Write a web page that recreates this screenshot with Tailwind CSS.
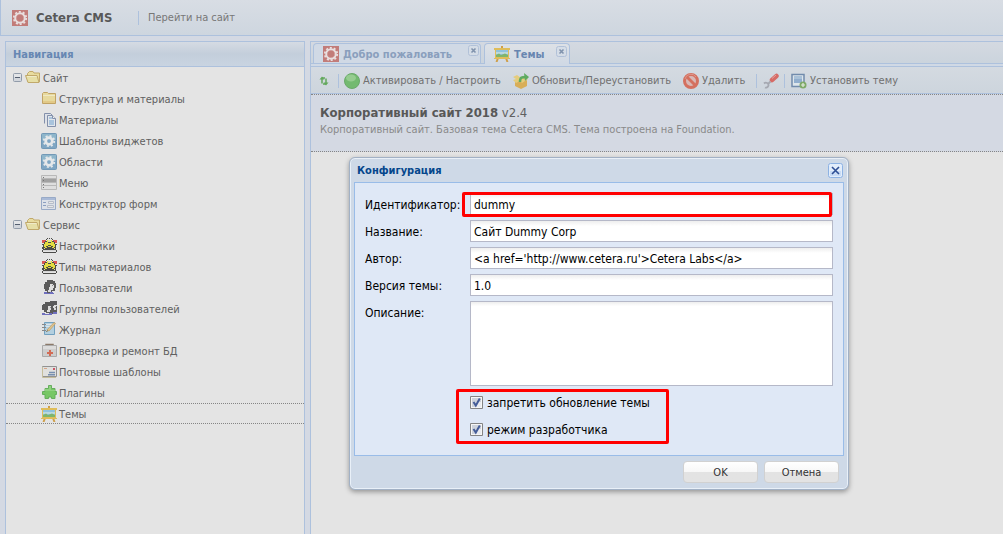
<!DOCTYPE html>
<html lang="ru">
<head>
<meta charset="utf-8">
<title>Cetera CMS</title>
<script src="https://cdn.jsdelivr.net/npm/@tailwindcss/browser@4"></script>
</head>
<body class="relative flex h-screen flex-col overflow-hidden bg-[#d4d9e3] font-['DejaVu_Sans_Condensed','DejaVu_Sans',sans-serif] text-[11px] leading-4 text-[#606060]">

<svg class="hidden" aria-hidden="true">
  <symbol id="logo" viewBox="0 0 16 16"><path fill="#c27c79" d="M0 0h16v16H0z"/><circle cx="8" cy="8" r="4.800" fill="none" stroke="#e9e0e0" stroke-width="2"/><circle cx="8" cy="8" r="6.200" fill="none" stroke="#e9e0e0" stroke-width="1.800" stroke-dasharray="2 1.900"/><circle cx="8" cy="8" r="3.600" fill="none" stroke="#d6a5a3" stroke-dasharray="1 1.300"/></symbol>
  <symbol id="minus" viewBox="0 0 9 9"><rect x=".5" y=".5" width="8" height="8" rx="1" fill="#d2d6dc" stroke="#929caa"/><path fill="#e2e4e7" d="M1 1h7v3H1z"/><path stroke="#555f70" d="M2 4.500h5"/></symbol>
  <symbol id="open" viewBox="0 0 16 16"><path d="M2.500 12V3.500l2-2H8l1 1.500h5.500V12" fill="#e8dc9f" stroke="#c1a96b"/><path d="M3 12.500 .5 5.500h11.500l2 7z" fill="#e6dfa6" stroke="#c1a96b"/><path d="M2 6.500h9.500" stroke="#f0ebc9"/></symbol>
  <symbol id="folder" viewBox="0 0 16 16"><path d="M1.500 12.500V2.500l1-1h4l1 1h7v10z" fill="#e7d99d" stroke="#c1a365"/><path d="M2 4.500h12" stroke="#efe8c5"/><path d="M2 10h12v2H2z" fill="#e2c987"/></symbol>
  <symbol id="docs" viewBox="0 0 16 16"><path d="M3.500 11.500v-10h6l2 2" fill="#dde1e8" stroke="#8390ab"/><path d="M6.500 3.500h5l3 3v8h-8z" fill="#e1e6ec" stroke="#8390ab"/><path fill="#a9c4dd" d="M8 8h5v5H8zM8 5h3v2H8z"/><path d="M11.500 3.500v3h3" fill="#eee" stroke="#8390ab"/></symbol>
  <symbol id="gear" viewBox="0 0 16 16"><rect x=".5" y=".5" width="15" height="15" rx="1" fill="#7fa6c3" stroke="#7299b7"/><path fill="#8eb6cb" d="M1 1h14v6H1z"/><circle cx="8" cy="8" r="3.300" fill="none" stroke="#e5e8ea" stroke-width="2.800"/><circle cx="8" cy="8" r="5.200" fill="none" stroke="#e5e8ea" stroke-width="1.800" stroke-dasharray="2 2.080"/></symbol>
  <symbol id="menu" viewBox="0 0 16 16"><path d="M.5 .5h15v14H.5z" fill="#dedede" stroke="#b8b8b8"/><path fill="#a0a0a0" d="M1 4h14v3H1z"/><path stroke="#b8b8b8" d="M0 3.500h16M0 7.500h16M0 10.500h16"/><path stroke="#777" d="M2 2.500h1M2 5.500h1M2 9.500h1M2 12.500h1"/></symbol>
  <symbol id="form" viewBox="0 0 16 16"><path d="M.5 1.500h14v12H.5z" fill="#dce1e8" stroke="#98aac7"/><path fill="#a9bad7" d="M1 2h13v2H1z"/><path d="M2 6.500h3M2 9.500h3" stroke="#8b9fc0"/><path d="M7.500 5.500h5v2h-5zM6.500 9.500h6v2h-6z" fill="#e6e6e6" stroke="#b6bdc9"/></symbol>
  <symbol id="bulb" viewBox="0 0 16 16" shape-rendering="crispEdges"><path fill="#dc5755" d="M1 2h4v3H1zM12 2h4v3h-4z"/><path fill="#e4e4e4" d="M5 1h7v4H5z"/><path fill="#4b4b48" d="M6 0h1v1H6zM8 0h1v1H8zM10 0h1v1h-1zM5 1h1v1H5zM11 1h1v1h-1zM4 3h9v1h1v2h1v7H2V6h1V4h1zM1 6h1v1H1zM15 6h1v1h-1zM1 9h1v2H1zM1 12h1v1H1zM15 12h1v1h-1z"/><path fill="#e4dd40" d="M6 2h1v2H6zM10 2h1v2h-1zM4 4h3v1h3V4h3v2h1v3h-2V8h-2V7H7v1H5v1H3V6h1zM4 9h2v1H4zM11 9h2v1h-2zM7 8h3v1H7z"/><path fill="#e4e29a" d="M7 2h3v2H7zM3 10h1v1H3zM13 10h1v1h-1z"/><path fill="#d4d4d4" d="M2 12h13v1H2z"/><path fill="#4b4b48" d="M2 14h13v1H2zM1 13h1v1H1zM15 13h1v1h-1z"/></symbol>
  <symbol id="user" viewBox="0 0 16 16" shape-rendering="crispEdges"><path fill="#5b5b5b" d="M6 0h6v1h2v2h1v5h-1v3h-3v2H6v-2H4V9H3V4h1V2h2z"/><path fill="#dedede" d="M9 4h3v1h1v3h-1v2h-2v2H7v-2h1V7h1z"/><path fill="#8c8c8c" d="M11 5h1v1h-1z"/><path fill="#6f6fbd" d="M3 12h3v1h3v-1h3v1h1v1H3z"/></symbol>
  <symbol id="users" viewBox="0 0 16 16" shape-rendering="crispEdges"><path fill="#5b5b5b" d="M9 0h7v13H9zM4 1h6v1h2v10H5v-1H3V9H1V4h1V3h2z"/><path fill="#dedede" d="M7 5h3v4H9v2H6V9h1zM13 4h3v1h-1v4h-2V7h-1V5h1z"/><path fill="#8c8c8c" d="M9 6h1v1H9zM14 6h1v1h-1z"/><path fill="#6f6fbd" d="M1 12h3v1h4v-1h3v2H1zM12 11h4v2h-4z"/></symbol>
  <symbol id="journal" viewBox="0 0 16 16"><path d="M3.500 .5h10v12h-10z" fill="#b3cfdf" stroke="#71a0bf"/><path stroke="#dbe4ea" d="M5 2.500h6M5 4.500h4"/><path stroke="#888" d="M1 2.500h4M1 5.500h4M1 8.500h4"/><path d="M6 8 13 .5 14.500 1.500 8 9z" fill="#dfc48c" stroke="#c29a60" stroke-width=".7"/><path stroke="#72633f" d="m5.500 10 1-1.500"/></symbol>
  <symbol id="medic" viewBox="0 0 16 16"><path d="M5 3V1.500h7V3" fill="none" stroke="#8b7969" stroke-width="1.500"/><path d="M1.500 2.500h14v11h-14z" fill="#cdcdcd" stroke="#aaa"/><path fill="#dcdcdc" d="M2 3h13v3H2z"/><path fill="#d26b55" d="M8 7h2v2h2v2h-2v2H8v-2H6V9h2z"/></symbol>
  <symbol id="mail" viewBox="0 0 16 16"><path d="M1.500 2.500h14v10h-14z" fill="#e0e0de" stroke="#929292"/><path fill="#c56" d="M12 4h2v2h-2z"/><path stroke="#d7a68b" d="M3 4.500h3"/><path stroke="#7890b0" stroke-width="1.500" d="M8 8.500h6M7 10.800h7"/><path d="M1.500 3v10.500H15" fill="none" stroke="#c5bd9b"/></symbol>
  <symbol id="puzzle" viewBox="0 0 16 16"><path d="M7.500 .5h3v3H14v3h1.500v3H14v4h-3.500V12h-3v1.500H4V9.500H1.500v-3H4v-3h3.500z" fill="#77c765" stroke="#66ae5d" stroke-linejoin="round"/><path fill="#8fd27f" d="M8 1h2v4h4v1H4V4h4z"/></symbol>
  <symbol id="theme" viewBox="0 0 16 16"><path stroke="#cf9f4a" stroke-width="2" d="m4 12-1.500 4M12 12l1.500 4M8 0v3"/><path fill="#dfbd5a" d="M0 2h16v2h-1v8h1v1H0v-1h1V4H0z"/><path fill="#8fc2df" d="M2 4h12v7H2z"/><path fill="#bad9df" d="M2 6h12v2H2z"/><path fill="#7fb56d" d="M2 11V9l3-1.500 2 1.500 4-1.500L14 9v2z"/></symbol>
  <symbol id="tabx" viewBox="0 0 11 11"><rect x=".5" y=".5" width="10" height="10" rx="2" fill="#d5dde7" stroke="#b1c1d8"/><path d="m3.500 3.500 4 4m0-4-4 4" stroke="#8093ad" stroke-width="1.600"/></symbol>
</svg>

<header class="flex h-9 shrink-0 items-center border-b border-l border-[#adc1dd] bg-linear-to-b from-[#d8dde4] to-[#ced6df] pl-[11px]">
  <svg class="size-4"><use href="#logo"/></svg>
  <h1 class="ml-2 w-[102px] text-[13px] font-bold text-[#585858]">Cetera CMS</h1>
  <span class="h-3.5 w-px bg-[#adc1dd]"></span>
  <a href="#" class="ml-[9px] text-[#777]">Перейти на сайт</a>
</header>

<div class="flex min-h-0 flex-1 gap-[5px] pt-[5px] pl-[5px]">
  <nav class="w-[300px] shrink-0 border border-b-0 border-[#adc1dd] bg-[#e4e4e4]" aria-label="Навигация">
    <h2 class="flex h-[25px] items-center border-b border-[#adc1dd] bg-linear-to-b from-[#d5dbe3] via-[#c3cedb] to-[#c9d4e1] pt-0.5 pl-[7px] font-bold text-[#6787b3]">Навигация</h2>
    <ul>
      <li class="flex h-[21px] items-center pl-[7px]"><svg class="mr-[3px] size-[9px]"><use href="#minus"/></svg><svg class="mr-0.5 size-4"><use href="#open"/></svg><span class="pt-0.5">Сайт</span></li>
      <li class="flex h-[21px] items-center gap-0.5 pl-[35px]"><svg class="size-4"><use href="#folder"/></svg><span class="pt-0.5">Структура и материалы</span></li>
      <li class="flex h-[21px] items-center gap-0.5 pl-[35px]"><svg class="size-4"><use href="#docs"/></svg><span class="pt-0.5">Материалы</span></li>
      <li class="flex h-[21px] items-center gap-0.5 pl-[35px]"><svg class="size-4"><use href="#gear"/></svg><span class="pt-0.5">Шаблоны виджетов</span></li>
      <li class="flex h-[21px] items-center gap-0.5 pl-[35px]"><svg class="size-4"><use href="#gear"/></svg><span class="pt-0.5">Области</span></li>
      <li class="flex h-[21px] items-center gap-0.5 pl-[35px]"><svg class="size-4"><use href="#menu"/></svg><span class="pt-0.5">Меню</span></li>
      <li class="flex h-[21px] items-center gap-0.5 pl-[35px]"><svg class="size-4"><use href="#form"/></svg><span class="pt-0.5">Конструктор форм</span></li>
      <li class="flex h-[21px] items-center pl-[7px]"><svg class="mr-[3px] size-[9px]"><use href="#minus"/></svg><svg class="mr-0.5 size-4"><use href="#open"/></svg><span class="pt-0.5">Сервис</span></li>
      <li class="flex h-[21px] items-center gap-0.5 pl-[35px]"><svg class="size-4"><use href="#bulb"/></svg><span class="pt-0.5">Настройки</span></li>
      <li class="flex h-[21px] items-center gap-0.5 pl-[35px]"><svg class="size-4"><use href="#bulb"/></svg><span class="pt-0.5">Типы материалов</span></li>
      <li class="flex h-[21px] items-center gap-0.5 pl-[35px]"><svg class="size-4"><use href="#user"/></svg><span class="pt-0.5">Пользователи</span></li>
      <li class="flex h-[21px] items-center gap-0.5 pl-[35px]"><svg class="size-4"><use href="#users"/></svg><span class="pt-0.5">Группы пользователей</span></li>
      <li class="flex h-[21px] items-center gap-0.5 pl-[35px]"><svg class="size-4"><use href="#journal"/></svg><span class="pt-0.5">Журнал</span></li>
      <li class="flex h-[21px] items-center gap-0.5 pl-[35px]"><svg class="size-4"><use href="#medic"/></svg><span class="pt-0.5">Проверка и ремонт БД</span></li>
      <li class="flex h-[21px] items-center gap-0.5 pl-[35px]"><svg class="size-4"><use href="#mail"/></svg><span class="pt-0.5">Почтовые шаблоны</span></li>
      <li class="flex h-[21px] items-center gap-0.5 pl-[35px]"><svg class="size-4"><use href="#puzzle"/></svg><span class="pt-0.5">Плагины</span></li>
      <li class="flex h-[21px] items-center gap-0.5 border-y border-dotted border-[#858585] pl-[35px]"><svg class="size-4"><use href="#theme"/></svg><span class="pt-0.5">Темы</span></li>
    </ul>
  </nav>

  <main class="flex min-w-0 flex-1 flex-col border-t border-l border-[#adc1dd] bg-[#e4e4e4]">
    <div class="flex h-[22px] items-end gap-[3px] border-b border-[#adc1dd] bg-linear-to-b from-[#d4d9e1] to-[#cbd4dd] pl-0.5 font-bold">
      <div class="flex h-5 w-[168px] items-center rounded-t-sm border border-b-0 border-[#adc1dd] bg-[#d0d9e5] pl-[9px] text-[#8a9fbd]">
        <svg class="size-4"><use href="#logo"/></svg><button class="ml-1 flex-1 pt-0.5 text-left">Добро пожаловать</button>
        <button class="mr-px mb-1.5" aria-label="Закрыть"><svg class="size-[11px]"><use href="#tabx"/></svg></button>
      </div>
      <div class="-mb-px flex h-[21px] w-[86px] items-center rounded-t-sm border border-b-0 border-[#adc1dd] bg-linear-to-b from-[#dde1e6] to-[#d0d9e5] pl-[9px] text-[#6886b0]">
        <svg class="size-4"><use href="#theme"/></svg><button class="ml-1 flex-1 pt-0.5 text-left">Темы</button>
        <button class="mr-0.5 mb-1.5" aria-label="Закрыть"><svg class="size-[11px]"><use href="#tabx"/></svg></button>
      </div>
    </div>
    <div class="h-[3px] border-b border-[#adc1dd] bg-[#d0d9e5]"></div>
    <div class="flex h-[27px] shrink-0 items-center border-b border-[#adc1dd] bg-linear-to-b from-[#d4dae1] to-[#cdd5dd] pt-px pl-[5px] text-[#707070]" role="toolbar">
      <button aria-label="Обновить" class="mr-1"><svg class="size-4" viewBox="0 0 16 16"><path d="M6 10.500V6M10 5.500V10M6 5h3M7 11h3" fill="none" stroke="#62a85c" stroke-width="1.500"/><path fill="#62a85c" d="M3.500 6.500 6 3.500 8.500 6.500zM7.500 9.500h5L10 12.500z"/></svg></button>
      <span class="mr-[5px] ml-0.5 h-3.5 w-px bg-[#adc1dd]"></span>
      <button class="flex w-[169px] items-center gap-[3px]"><svg class="size-4" viewBox="0 0 16 16"><circle cx="8" cy="8" r="7.500" fill="#73ba70" stroke="#6aa969"/><ellipse cx="7" cy="5" rx="5" ry="3.500" fill="#96cc90"/></svg>Активировать / Настроить</button>
      <button class="flex w-[170px] items-center gap-[3px]"><svg class="size-4" viewBox="0 0 16 16"><path fill="#d8ae58" d="m2 7 6 2 6-2v6l-6 3-6-3z"/><path fill="#e5cc7c" d="m0 4 4-2 4 3 3-2 4 3-6 4-2-2-4 2-3-3 3-1z"/><path d="M7 9c0-5 2-5 6-5" stroke="#5fab61" stroke-width="2.500" fill="none"/><path fill="#5fab61" d="m11 0 5 4-4 4z"/></svg>Обновить/Переустановить</button>
      <button class="flex w-[73px] items-center gap-[3px]"><svg class="size-4" viewBox="0 0 16 16"><circle cx="8" cy="8" r="6.500" fill="#d8b8b6" stroke="#d4705f" stroke-width="3"/><path stroke="#d4705f" stroke-width="3" d="m4 4 8 8"/><path d="M2 6a6 6 0 0 1 11-2" fill="none" stroke="#df968a"/></svg>Удалить</button>
      <span class="mr-1.5 h-3.5 w-px bg-[#adc1dd]"></span>
      <button aria-label="Настройки"><svg class="size-4" viewBox="0 0 16 16"><path stroke="#d66b66" stroke-width="4.500" stroke-linecap="round" d="m9 7 4.500-4"/><path stroke="#e3a29e" d="m9 5.500 4-3.500"/><path d="M7.500 8.500 5 11M1 10.500c2-2 5 0 4.500 2S3 15 2 14.500" fill="none" stroke="#a5a8b1" stroke-width="1.800"/></svg></button>
      <span class="mr-1.5 ml-[5px] h-3.5 w-px bg-[#adc1dd]"></span>
      <button class="flex items-center gap-[3px]"><svg class="size-4" viewBox="0 0 16 16"><path d="M1 1.500h12v12H1z" fill="#dde5eb" stroke="#718bac" stroke-width="1.500"/><path fill="#91aece" d="M3 3h8v7H3z"/><path fill="#a9c1d8" d="M3 3h8v3H3z"/><circle cx="12" cy="12" r="3.500" fill="#7faa68"/><path stroke="#e4eadf" stroke-width="1.200" d="M10 12h4M12 10v4"/></svg>Установить тему</button>
    </div>
    <section class="h-[58px] shrink-0 border-y border-dotted border-[#858585] bg-[#d4d9e3] px-[9px] pt-[9px]">
      <h3 class="text-[13px] leading-[18px] text-[#606060]"><b class="text-[#585858]">Корпоративный сайт 2018</b> v2.4</h3>
      <p class="text-[#8a8a8a]">Корпоративный сайт. Базовая тема Cetera CMS. Тема построена на Foundation.</p>
    </section>
  </main>
</div>

<div role="dialog" aria-labelledby="dlg" class="absolute top-[157px] left-[349px] w-[500px] rounded-md border border-[#a2b1c5] bg-[#ced9e7] px-1 pb-1.5 text-[12px] text-black shadow-[0_2px_5px_0_#00000059,inset_0_0_0_1px_#e9f0f8]">
  <div class="flex h-6 items-center justify-between pr-px pl-[3px]">
    <h2 id="dlg" class="pt-0.5 text-[11px] font-bold text-[#04468c]">Конфигурация</h2>
    <button aria-label="Закрыть"><svg class="size-[15px]" viewBox="0 0 15 15"><rect x=".5" y=".5" width="14" height="14" rx="2" fill="#e2edfb" stroke="#8db2e3"/><path fill="#c9dcf5" d="M2 8h11v5H2z"/><path d="m4 4 7 7m0-7-7 7" stroke="#2e4f95" stroke-width="1.600"/></svg></button>
  </div>
  <form class="flex flex-col gap-[5px] border border-[#99bce8] bg-[#dfe8f6] px-2.5 pt-2.5 pb-[15px]">
    <div class="relative flex items-center"><label for="f1" class="w-[105px] pt-0.5">Идентификатор:</label><input id="f1" value="dummy" class="h-[22px] min-w-0 flex-1 border border-[#b5b8c8] bg-linear-to-b from-[#eee] to-white to-25% px-[3px] pt-0.5"><span class="pointer-events-none absolute -top-px right-px -bottom-0.5 left-[97px] rounded-xs border-3 border-[#f00]"></span></div>
    <div class="flex items-center"><label for="f2" class="w-[105px] pt-0.5">Название:</label><input id="f2" value="Сайт Dummy Corp" class="h-[22px] min-w-0 flex-1 border border-[#b5b8c8] bg-linear-to-b from-[#eee] to-white to-25% px-[3px] pt-0.5"></div>
    <div class="flex items-center"><label for="f3" class="w-[105px] pt-0.5">Автор:</label><input id="f3" value="&lt;a href='http://www.cetera.ru'&gt;Cetera Labs&lt;/a&gt;" class="h-[22px] min-w-0 flex-1 border border-[#b5b8c8] bg-linear-to-b from-[#eee] to-white to-25% px-[3px] pt-0.5"></div>
    <div class="flex items-center"><label for="f4" class="w-[105px] pt-0.5">Версия темы:</label><input id="f4" value="1.0" class="h-[22px] min-w-0 flex-1 border border-[#b5b8c8] bg-linear-to-b from-[#eee] to-white to-25% px-[3px] pt-0.5"></div>
    <div class="flex items-start"><label for="f5" class="w-[105px] pt-1">Описание:</label><textarea id="f5" class="h-[85px] min-w-0 flex-1 resize-none border border-[#b5b8c8] bg-linear-to-b from-[#eee] to-white to-5%"></textarea></div>
    <div class="relative ml-[105px] flex flex-col items-start gap-[5px]">
      <span class="pointer-events-none absolute -top-0.5 -bottom-1 -left-3.5 w-[213px] rounded-xs border-3 border-[#f00]"></span>
      <label class="flex h-[22px] items-center gap-1"><input type="checkbox" checked class="peer sr-only"><svg class="size-[13px]" viewBox="0 0 13 13"><path d="M.5 .5h12v12H.5z" fill="#f6f6f6" stroke="#848484"/><path fill="#cdd2db" d="M2 2h9v9H2z"/><path fill="#e9ebef" d="M6 6h5v5H6z"/><path d="m3.500 6 2.300 3.500 4-7" fill="none" stroke="#445c98" stroke-width="2"/></svg><span class="pt-0.5">запретить обновление темы</span></label>
      <label class="flex h-[22px] items-center gap-1"><input type="checkbox" checked class="peer sr-only"><svg class="size-[13px]" viewBox="0 0 13 13"><path d="M.5 .5h12v12H.5z" fill="#f6f6f6" stroke="#848484"/><path fill="#cdd2db" d="M2 2h9v9H2z"/><path fill="#e9ebef" d="M6 6h5v5H6z"/><path d="m3.500 6 2.300 3.500 4-7" fill="none" stroke="#445c98" stroke-width="2"/></svg><span class="pt-0.5">режим разработчика</span></label>
    </div>
  </form>
  <div class="flex justify-end gap-1.5 pt-[5px] pr-[5px] text-[11px] text-[#333]">
    <button class="h-[22px] w-[75px] rounded-sm border border-[#d1d1d1] bg-linear-to-b from-white from-0% via-[#f7f7f7] via-50% to-[#e3e3e3] to-50% pt-0.5">OK</button>
    <button class="h-[22px] w-[75px] rounded-sm border border-[#d1d1d1] bg-linear-to-b from-white from-0% via-[#f7f7f7] via-50% to-[#e3e3e3] to-50% pt-0.5">Отмена</button>
  </div>
</div>
</body>
</html>
